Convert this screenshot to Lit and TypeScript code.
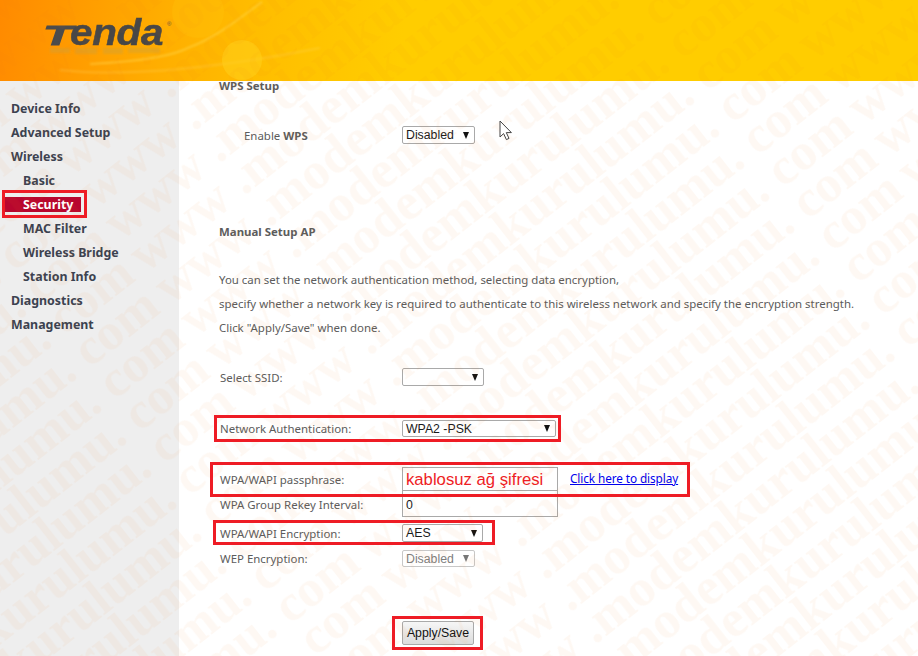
import { LitElement, html, css, svg } from "lit";
import { customElement } from "lit/decorators.js";

@customElement("app-root")
export class AppRoot extends LitElement {
  static styles = css`
    :host { display: block; position: relative; width: 918px; height: 656px; overflow: hidden; background: #fff;
      font-family: "Noto Sans", "DejaVu Sans", sans-serif; font-size: 11.45px; color: #5c5c5c; }
    * { box-sizing: border-box; }
    .header { height: 81px; position: relative; overflow: hidden;
      background: linear-gradient(98deg, #ff8a00 0%, #ff9c00 9%, #ffae00 18%, #ffbd00 28%, #ffc500 36%, #ffcd00 44%, #ffcd00 100%); }
    .art { display: block; position: absolute; inset: 0; }
    .logo { position: absolute; left: 43px; top: 13px; display: flex; align-items: baseline; height: 40px;
      font: italic 700 36px/40px "Liberation Sans", sans-serif; color: #474747; -webkit-text-stroke: .5px #474747; }
    .logo span { display: block; }
    .logo .t { font-size: 28px; width: 27px; transform: scaleX(1.72); transform-origin: left bottom; -webkit-text-stroke: 1px #4c4c4c; color: #4c4c4c; }
    .logo .r { letter-spacing: -.2px; transform: scaleX(1.12); transform-origin: left bottom; }
    .reg { position: absolute; left: 167px; top: 21px; font: 400 6px/6px "Liberation Sans", sans-serif; color: #5b5040; }
    .main { display: flex; height: 575px; }
    .side { width: 179px; background: #eeeeee; padding-top: 16px; flex: none; display: flex; flex-direction: column;
      font-weight: 700; color: #3c4250; font-size: 12.4px; }
    .side a { height: 24px; line-height: 24px; padding-left: 11px; }
    .side a.sub { padding-left: 23px; }
    .side a.active { color: #fff; position: relative; z-index: 0; }
    .side a.active::before { content: ""; position: absolute; z-index: -1; left: 5px; width: 76px; top: 4px; height: 15px; background: #b8062e; }
    .content { flex: 1; padding-left: 40px; display: flex; flex-direction: column; align-items: flex-start; }
    h3 { margin: 0; font-size: 11.45px; font-weight: 700; color: #5c5c5c; }
    .h1 { height: 9px; line-height: 8px; padding-top: 1px; }
    .h2 { height: 16px; line-height: 16px; margin-top: 79px; }
    .row { display: grid; grid-template-columns: 182px auto auto; align-items: center; padding-left: 1px; }
    .wps { margin-top: 35px; height: 20px; padding-left: 25px; grid-template-columns: 158px auto; }
    .para { margin: 28px 0 0; line-height: 24px; }
    .para div { white-space: nowrap; }
    .ssid { margin-top: 28px; } .auth { margin-top: 34px; } .passrow { margin-top: 30px; } .enc { margin-top: 7px; } .wep { margin-top: 8px; }
    .sel { display: flex; align-items: center; justify-content: space-between; border: 1px solid #a9a9a9; border-radius: 2px; background: #fff;
      color: #1a1a1a; font: 12.3px "Liberation Sans", sans-serif; padding: 0 5px 0 3px; height: 18px; }
    .sel i { width: 0; height: 0; border-left: 3.5px solid transparent; border-right: 3.5px solid transparent; border-top: 7px solid #111; }
    .sel.dis { color: #808080; border-color: #c8c8c8; height: 17px; }
    .sel.dis i { border-top-color: #777; }
    .w73 { width: 73px; } .w81 { width: 81px; } .w82 { width: 82px; } .w154 { width: 154px; height: 17px; }
    .input { width: 156px; border: 1px solid #a9a9a9; display: flex; align-items: center; padding-left: 3px; color: #1a1a1a; font: 12.3px "Liberation Sans", sans-serif; background: #fff; }
    .pass { color: #ee1c25; font-size: 16.7px; height: 24px; padding-top: 2px; }
    .rekey { height: 26px; border-top: 0; padding-top: 2px; }
    .link { color: #0000ee; text-decoration: underline; font-size: 11.8px; margin-left: 12px; margin-top: -2px; letter-spacing: -.1px; }
    .btn { margin: 54px 0 0 183px; width: 72px; height: 24px; border: 1px solid #a9a9a9; border-radius: 2px;
      background: linear-gradient(#f6f6f6, #dcdcdc); color: #111; font: 12.3px "Liberation Sans", sans-serif; padding: 0; }
    .wm { position: absolute; inset: 0; display: block; pointer-events: none; }
    .wm text { font: 700 52px "Liberation Serif", serif; fill: rgb(230, 110, 20); fill-opacity: .052; white-space: pre; }
    .mark { position: absolute; border: 3px solid #ee1c25; pointer-events: none; }
    .m1 { left: 2px; top: 190px; width: 85px; height: 28px; }
    .m2 { left: 214px; top: 415px; width: 347px; height: 27px; }
    .m3 { left: 210px; top: 462px; width: 480px; height: 35px; }
    .m4 { left: 213px; top: 520px; width: 282px; height: 25px; }
    .m5 { left: 392px; top: 616px; width: 91px; height: 34px; }
    .cursor { position: absolute; left: 499px; top: 120px; }
  `;

  render() {
    return html`
      <div class="header">
        <svg class="art" width="918" height="81" viewBox="0 0 918 81">
          <defs><filter id="b"><feGaussianBlur stdDeviation="1.2"/></filter></defs>
          ${svg`
            <path d="M90 64C130 62 170 58 190 47C215 38 240 18 262 2" fill="none" stroke="#ffdc55" stroke-opacity=".55" stroke-width="1.6" filter="url(#b)"/>
            <path d="M60 70C130 78 230 66 320 48" fill="none" stroke="#ffd860" stroke-opacity=".3" stroke-width="2" filter="url(#b)"/>
            <circle cx="242" cy="60" r="20" fill="#ffd21c" fill-opacity=".5"/>
            <circle cx="198" cy="12" r="26" fill="#ffc60c" fill-opacity=".25"/>
            <g fill="#c8a040" fill-opacity=".4" filter="url(#b)">
              <rect x="50" y="48" width="20" height="5"/><rect x="75" y="48" width="22" height="6"/><rect x="103" y="48" width="20" height="6"/><rect x="128" y="48" width="32" height="5"/>
            </g>
          `}
        </svg>
        <div class="logo"><span class="t">T</span><span class="r">enda</span></div>
        <div class="reg">®</div>
      </div>
      <div class="main">
        <nav class="side">
          <a>Device Info</a><a>Advanced Setup</a><a>Wireless</a>
          <a class="sub">Basic</a><a class="sub active">Security</a><a class="sub">MAC Filter</a>
          <a class="sub">Wireless Bridge</a><a class="sub">Station Info</a>
          <a>Diagnostics</a><a>Management</a>
        </nav>
        <section class="content">
          <h3 class="h1">WPS Setup</h3>
          <div class="row wps"><span>Enable <b>WPS</b></span><div class="sel w73">Disabled<i></i></div></div>
          <h3 class="h2">Manual Setup AP</h3>
          <div class="para">
            <div>You can set the network authentication method, selecting data encryption,</div>
            <div>specify whether a network key is required to authenticate to this wireless network and specify the encryption strength.</div>
            <div>Click "Apply/Save" when done.</div>
          </div>
          <div class="row ssid"><span>Select SSID:</span><div class="sel w82"><span></span><i></i></div></div>
          <div class="row auth"><span>Network Authentication:</span><div class="sel w154">WPA2 -PSK<i></i></div></div>
          <div class="row passrow"><span>WPA/WAPI passphrase:</span><div class="input pass">kablosuz ağ şifresi</div><a class="link">Click here to display</a></div>
          <div class="row"><span>WPA Group Rekey Interval:</span><div class="input rekey">0</div></div>
          <div class="row enc"><span>WPA/WAPI Encryption:</span><div class="sel w81">AES<i></i></div></div>
          <div class="row wep"><span>WEP Encryption:</span><div class="sel dis w73">Disabled<i></i></div></div>
          <button class="btn">Apply/Save</button>
        </section>
      </div>
      <svg class="wm" width="918" height="656" viewBox="0 0 918 656">
        <defs>
          <pattern id="wm" patternUnits="userSpaceOnUse" width="657" height="40.7" patternTransform="rotate(-38) translate(-54 -16.9)">
            <text x="0" y="37">www .modemkurulumu. com</text>
          </pattern>
        </defs>
        <rect width="918" height="656" fill="url(#wm)"/>
      </svg>
      <div class="mark m1"></div><div class="mark m2"></div><div class="mark m3"></div><div class="mark m4"></div><div class="mark m5"></div>
      <svg class="cursor" width="14" height="21" viewBox="0 0 14 21"><path d="M1 1V17L4.6 13.6 7.4 19.6 10 18.4 7.3 12.6H12.4Z" fill="#fff" stroke="#444" stroke-width="1"/></svg>
    `;
  }
}
